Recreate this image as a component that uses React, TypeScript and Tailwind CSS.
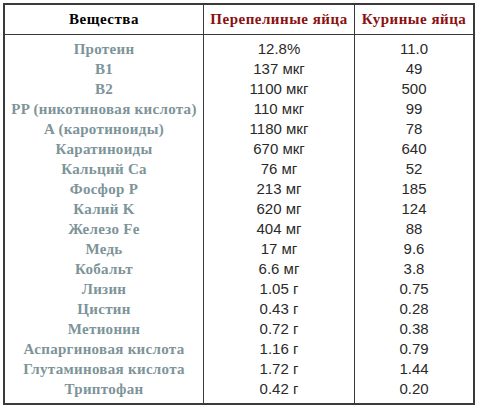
const rows: [string, string, string][] = [
  ["Протеин", "12.8%", "11.0"],
  ["B1", "137 мкг", "49"],
  ["B2", "1100 мкг", "500"],
  ["PP (никотиновая кислота)", "110 мкг", "99"],
  ["A (каротиноиды)", "1180 мкг", "78"],
  ["Каратиноиды", "670 мкг", "640"],
  ["Кальций Ca", "76 мг", "52"],
  ["Фосфор P", "213 мг", "185"],
  ["Калий K", "620 мг", "124"],
  ["Железо Fe", "404 мг", "88"],
  ["Медь", "17 мг", "9.6"],
  ["Кобальт", "6.6 мг", "3.8"],
  ["Лизин", "1.05 г", "0.75"],
  ["Цистин", "0.43 г", "0.28"],
  ["Метионин", "0.72 г", "0.38"],
  ["Аспаргиновая кислота", "1.16 г", "0.79"],
  ["Глутаминовая кислота", "1.72 г", "1.44"],
  ["Триптофан", "0.42 г", "0.20"],
];

const serif = "font-['Liberation_Serif','Times_New_Roman',serif]";
const sans = "font-['Liberation_Sans',Arial,sans-serif]";

export default function App() {
  return (
    <div className="w-[477px] h-[408px] bg-white pl-[3px] pt-[3px]">
      <div className="w-[472px] border-2 border-[#3a3a3a]">
        {/* header */}
        <div className={`grid grid-cols-[199px_151px_118px] h-[30px] border-b border-[#3a3a3a] ${serif} font-bold text-[15px] tracking-[0.5px]`}>
          <div className="flex items-center justify-center border-r border-[#3a3a3a] text-black">
            Вещества
          </div>
          <div className="flex items-center justify-center border-r border-[#3a3a3a] text-[#8b1010]">
            Перепелиные яйца
          </div>
          <div className="flex items-center justify-center text-[#8b1010]">
            Куриные яйца
          </div>
        </div>

        {/* body */}
        <div className="grid grid-cols-[199px_151px_118px]">
          <div className={`flex flex-col py-[4px] border-r border-[#3a3a3a] ${serif} font-bold text-[15px] text-[#7d9499] tracking-[0.3px]`}>
            {rows.map((r) => (
              <div key={r[0]} className="h-[20px] leading-[20px] text-center whitespace-nowrap">
                {r[0]}
              </div>
            ))}
          </div>
          <div className={`flex flex-col py-[4px] border-r border-[#3a3a3a] ${sans} text-[15px] text-[#2a2a2a]`}>
            {rows.map((r) => (
              <div key={r[0]} className="h-[20px] leading-[20px] text-center">
                {r[1]}
              </div>
            ))}
          </div>
          <div className={`flex flex-col py-[4px] ${sans} text-[15px] text-[#2a2a2a]`}>
            {rows.map((r) => (
              <div key={r[0]} className="h-[20px] leading-[20px] text-center">
                {r[2]}
              </div>
            ))}
          </div>
        </div>
      </div>
    </div>
  );
}
